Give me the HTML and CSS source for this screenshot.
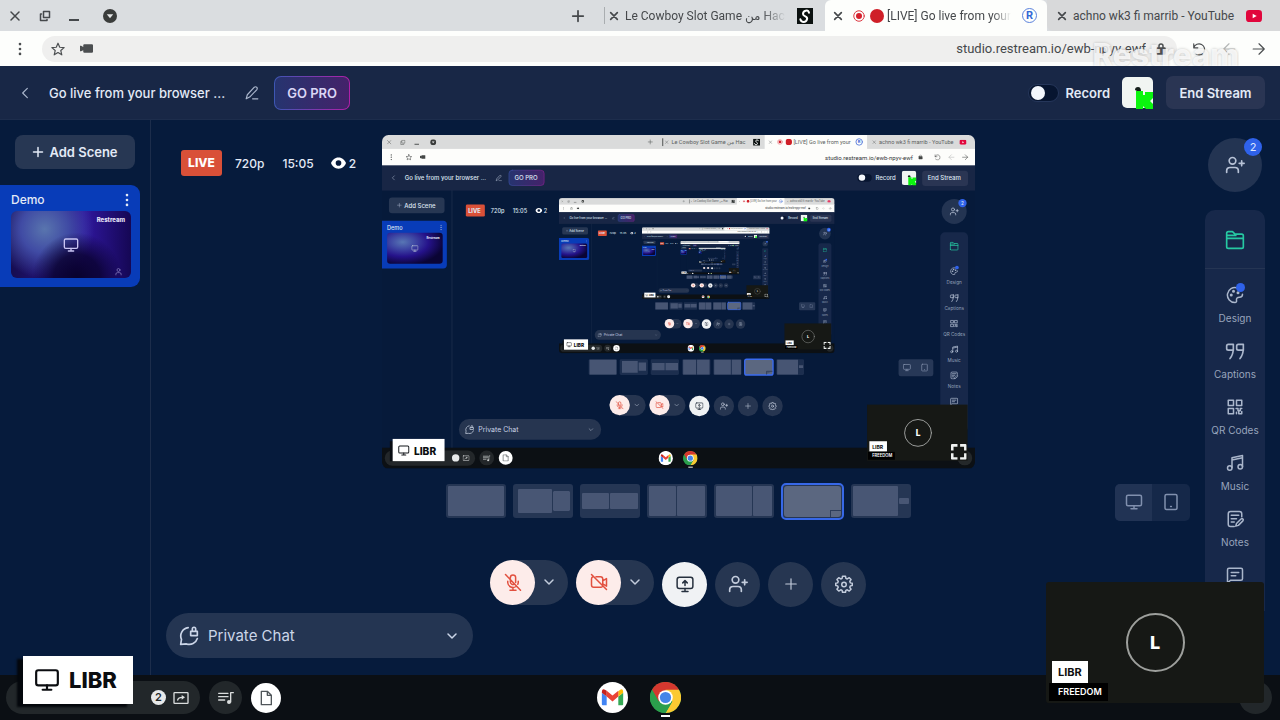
FILE: index.html
```html
<!DOCTYPE html>
<html lang="en">
<head>
<meta charset="utf-8">
<title>Restream Studio</title>
<meta name="viewport" content="width=device-width, initial-scale=1">
<link rel="stylesheet" href="styles.css">
</head>
<body>
<svg class="sprite" aria-hidden="true">
  <defs>
    <radialGradient id="glow" cx="0.28" cy="0.3" r="0.75">
      <stop offset="0" stop-color="#5876b4"/><stop offset="0.3" stop-color="#3e47a4"/><stop offset="0.62" stop-color="#25128a"/><stop offset="1" stop-color="#0a0434"/>
    </radialGradient>
    <linearGradient id="proEdge"><stop offset="0" stop-color="#3d57b4"/><stop offset="1" stop-color="#a31fa0"/></linearGradient>
    <linearGradient id="proFill"><stop offset="0" stop-color="#26346f"/><stop offset="1" stop-color="#44226a"/></linearGradient>
    <clipPath id="frame"><rect width="1280" height="720" rx="14"/></clipPath>
  </defs>
  <symbol id="i-close" viewBox="0 0 24 24"><path d="M4 4l16 16M20 4L4 20"/></symbol>
  <symbol id="i-restore" viewBox="0 0 24 24"><path d="M9 3h12v12H9zM5 8H3v13h13v-2"/></symbol>
  <symbol id="i-down-circle" viewBox="0 0 24 24"><circle cx="12" cy="12" r="12" fill="#3a3c3b" stroke="none"/><path d="M6.500 9h11L12 16z" fill="#e4e6e7" stroke="none"/></symbol>
  <symbol id="i-plus" viewBox="0 0 24 24"><path d="M12 3v18M3 12h18"/></symbol>
  <symbol id="i-dots" viewBox="0 0 24 24"><g fill="currentColor" stroke="none"><circle cx="12" cy="3.500" r="2.300"/><circle cx="12" cy="12" r="2.300"/><circle cx="12" cy="20.500" r="2.300"/></g></symbol>
  <symbol id="i-star" viewBox="0 0 24 24"><path d="M12 2l3 7 7.500.6-5.700 5 1.700 7.400-6.500-4-6.500 4 1.700-7.400-5.700-5L9 9z"/></symbol>
  <symbol id="i-camcorder" viewBox="0 0 24 16"><path d="M8 0h14q2 0 2 2v12q0 2-2 2H8q-2 0-2-2v-3l-4 2H0V3h2l4 2V2q0-2 2-2z" fill="currentColor" stroke="none"/></symbol>
  <symbol id="i-lock" viewBox="0 0 24 24"><rect x="4" y="10" width="16" height="12" rx="1" fill="currentColor"/><path d="M8 10V6a4 4 0 0 1 8 0v4"/></symbol>
  <symbol id="i-reload" viewBox="0 0 24 24"><path d="M3 3v7h7M3 10a9.500 9.500 0 1 1 2 9"/></symbol>
  <symbol id="i-back" viewBox="0 0 24 24"><path d="M22 12H3M12 3l-9 9 9 9"/></symbol>
  <symbol id="i-forward" viewBox="0 0 24 24"><path d="M2 12h19M12 3l9 9-9 9"/></symbol>
  <symbol id="i-left" viewBox="0 0 24 24"><path d="M16 4l-8 8 8 8"/></symbol>
  <symbol id="i-down" viewBox="0 0 24 24"><path d="M4 8l8 8 8-8"/></symbol>
  <symbol id="i-pencil" viewBox="0 0 24 24"><path d="M2 22l2-7L16 2q2-1.500 4 0 2 2 0 4.500L8 19zM13 22h9"/></symbol>
  <symbol id="i-eye" viewBox="0 0 24 18"><path d="M12 0C6 0 2 4 0 9c2 5 6 9 12 9s10-4 12-9C22 4 18 0 12 0z" fill="#fff" stroke="none"/><circle cx="12" cy="9" r="4.500" fill="#071a3a" stroke="none"/></symbol>
  <symbol id="i-monitor" viewBox="0 0 24 24"><rect x="2" y="3" width="20" height="14" rx="2"/><path d="M12 17v4M8 21h8"/></symbol>
  <symbol id="i-share" viewBox="0 0 24 24"><rect x="1.500" y="3" width="21" height="15" rx="3"/><path d="M12 18v4M8 22h8M12 14V8M9 10.500L12 7.500l3 3"/></symbol>
  <symbol id="i-tablet" viewBox="0 0 24 24"><rect x="4" y="2" width="16" height="20" rx="2"/><path d="M11.500 18h1"/></symbol>
  <symbol id="i-person" viewBox="0 0 24 24"><circle cx="12" cy="8" r="4"/><path d="M5 21v-2q0-4 4-4h6q4 0 4 4v2"/></symbol>
  <symbol id="i-person-plus" viewBox="0 0 24 24"><circle cx="9" cy="7" r="4"/><path d="M2 21v-2q0-4 4-4h6q4 0 4 4v2M20 7v6M17 10h6"/></symbol>
  <symbol id="i-mic-off" viewBox="0 0 24 24"><path d="M8.500 7V6a3.500 3.500 0 0 1 7 0v6.500M8.500 9v3a3.500 3.500 0 0 0 5 3M5 11v2a7 7 0 0 0 11 5M19 11v2l-.6 2M12 19.500V23M8 23h8M2 2l20 21"/></symbol>
  <symbol id="i-cam-off" viewBox="0 0 24 24"><path d="M8 5h6q3 0 3 3v8M4 5q-2 .5-2 3v8q0 3 3 3h9q2 0 2.500-1M17 10.500l5-3v10l-5-3M2 2l20 20"/></symbol>
  <symbol id="i-gear" viewBox="0 0 24 24"><path d="M9.500 4.500L10 1.500h4l.5 3 1.800.8L19 3.600 21.400 6l-1.700 2.600.8 1.900 2.500.5v3l-2.500.5-.8 1.900 1.700 2.600-2.400 2.400-2.700-1.700-1.800.8-.5 2.500h-4l-.5-2.500-1.800-.8L5 21.400 2.600 19l1.700-2.600-.8-1.900L1 14v-3l2.500-.5.8-1.900L2.600 6 5 3.600l2.700 1.700z"/><circle cx="12" cy="12.500" r="3"/></symbol>
  <symbol id="i-folder" viewBox="0 0 24 24"><path d="M2 20V4q0-2 2-2h5l3 3h8q2 0 2 2v13q0 2-2 2H4q-2 0-2-2zM2 10h20M2 6.500h11"/></symbol>
  <symbol id="i-palette" viewBox="0 0 24 24"><path d="M15 2.500A10 10 0 1 0 12 22q2.500 0 2-3-.5-4 4-4 4 0 4-4"/><g fill="currentColor"><circle cx="7" cy="12" r="1"/><circle cx="10" cy="7" r="1"/><circle cx="16" cy="9" r="1"/></g></symbol>
  <symbol id="i-quote" viewBox="0 0 24 24"><path d="M10 9q0 7-4 12M10 4H4Q2 4 2 6v3q0 2 2 2h6V4zM22 9q0 7-4 12M22 4h-6q-2 0-2 2v3q0 2 2 2h6V4z"/></symbol>
  <symbol id="i-qr" viewBox="0 0 24 24"><path d="M3 3h7v7H3zM14 3h7v7h-7zM3 14h7v7H3zM13.500 14h2.500v3h3v-3h2M14 21v-2M17 18v3h4v-3"/></symbol>
  <symbol id="i-music" viewBox="0 0 24 24"><path d="M8 18V5l14-3v15M8 8l14-3"/><circle cx="5" cy="18.500" r="3"/><circle cx="19" cy="17" r="3"/></symbol>
  <symbol id="i-notes" viewBox="0 0 24 24"><path d="M11 22H6q-3 0-3-3V5q0-3 3-3h12q3 0 3 3v4M7 7h10M7 11.500h7M7 16h4M14 18l6-6q1.500-1 2.500 0t0 2.500l-6 6-3.500 1z"/></symbol>
  <symbol id="i-comment" viewBox="0 0 24 24"><path d="M2 23V5q0-2 2-2h16q2 0 2 2v12q0 2-2 2H6zM7 8.500h10M7 13h6"/></symbol>
  <symbol id="i-chat-lock" viewBox="0 0 24 24"><path d="M11 2A10 10 0 0 0 3 16l-1 6 7-.5A10 10 0 0 0 22 15M14 6.500h8v5h-8zM16 6.500V3.500a2 2 0 0 1 4 0v3"/></symbol>
  <symbol id="i-cast" viewBox="0 0 24 24"><rect x="1.500" y="4" width="21" height="16" rx="1"/><path d="M7 15q1-4 7-4"/><path d="M13 7.500l5 3.500-5 3.500z" fill="currentColor" stroke="none"/></symbol>
  <symbol id="i-playlist" viewBox="0 0 24 24"><path d="M1 5h14M1 10h14M1 15h9M19 18V4h4"/><circle cx="16.500" cy="18" r="3" fill="currentColor" stroke="none"/></symbol>
  <symbol id="i-file" viewBox="0 0 24 24"><path d="M5 2h9l6 6v14H5zM14 2v6h6"/></symbol>
  <symbol id="i-expand" viewBox="0 0 24 24"><path d="M2 8V2h6M16 2h6v6M22 16v6h-6M8 22H2v-6"/></symbol>
  <symbol id="i-record" viewBox="0 0 24 24"><circle cx="12" cy="12" r="10.500" fill="none" stroke="#dc3b45" stroke-width="2"/><circle cx="12" cy="12" r="6" fill="#d51f2c" stroke="none"/></symbol>
  <symbol id="i-live" viewBox="0 0 24 24"><circle cx="12" cy="12" r="12" fill="#cf1f28" stroke="none"/></symbol>
  <symbol id="i-youtube" viewBox="0 0 24 18"><rect width="24" height="18" rx="5" fill="#e1063c" stroke="none"/><path d="M10 5.500l6 3.500-6 3.500z" fill="#fff" stroke="none"/></symbol>
  <symbol id="i-script" viewBox="0 0 24 24"><rect width="24" height="24" fill="#0b1110" stroke="none"/><path d="M18 7q-1-4-5-3T9 9q0 2 3.500 3.500T15 17q-1 4-5 4t-5-4" fill="none" stroke="#fff" stroke-width="3"/></symbol>
  <symbol id="i-gmail" viewBox="0 0 32 32"><g stroke="none"><circle cx="16" cy="16" r="16" fill="#fff"/><path d="M5 11l5 4v9H6q-1 0-1-1z" fill="#4285f4"/><path d="M27 11l-5 4v9h4q1 0 1-1z" fill="#34a853"/><path d="M22 9.500Q27 5 27 11l-5 4z" fill="#fbbc04"/><path d="M10 9l6 5 6-5v6l-6 5-6-5z" fill="#ea4335"/><path d="M5 11q0-6 5-2v6z" fill="#c5221f"/></g></symbol>
  <symbol id="i-chrome" viewBox="0 0 32 32"><g stroke="none"><circle cx="16" cy="16" r="16" fill="#2b9f4c"/><path d="M16 16L2.100 8A16 16 0 0 1 29.900 8z" fill="#d5382f"/><path d="M2.100 8H16v8l-7 4z" fill="#d5382f"/><path d="M16 8h13.900A16 16 0 0 1 16 32l7-12z" fill="#fbc932"/><path d="M2.100 8L9 20l7 4 7-4-7 12A16 16 0 0 1 2.100 8z" fill="#2b9f4c"/><circle cx="16" cy="16" r="7.500" fill="#fff"/><circle cx="16" cy="16" r="5.800" fill="#4585e8"/></g></symbol>
  <symbol id="i-avatar" viewBox="0 0 32 32"><g stroke="none"><rect width="31" height="31" rx="5" fill="#f1f5f2"/><path d="M13 13q0-3 3-3 3 0 3 4h-4z" fill="#16201c"/><path d="M14 14h7v4h2v-3h8v6l-3 3 3 3v5h-7l-3-3v3h-7z" fill="#0bf50e"/></g></symbol>

  <!-- Whole shared desktop, drawn on a 1280 x 720 canvas and stacked inside the preview -->
  <symbol id="desktop" viewBox="0 0 1280 720">
    <g clip-path="url(#frame)" fill="none" stroke-width="2" stroke-linecap="round" stroke-linejoin="round">
      <rect width="1280" height="720" fill="#061a3a"/>
      <rect width="1280" height="32" fill="#dadbdb"/>
      <path d="M826 32V0h221v32z" fill="#fdfdfb"/>
      <rect y="30" width="1280" height="36" fill="#fdfdfb"/>
      <g stroke="#444746" color="#444746">
        <use href="#i-close" x="10" y="10" width="11" height="11"/><use href="#i-restore" x="39" y="10" width="12" height="12"/><path d="M71 20h8M606 8v15"/>
        <use href="#i-down-circle" x="104" y="9" width="13" height="13"/><use href="#i-plus" x="573" y="9" width="12" height="12"/>
        <use href="#i-close" x="610" y="11" width="9" height="9"/><use href="#i-close" x="834" y="11" width="9" height="9"/><use href="#i-close" x="1058" y="11" width="9" height="9"/>
        <use href="#i-dots" x="13" y="41" width="14" height="14"/><use href="#i-star" x="51" y="41" width="14" height="14"/><use href="#i-camcorder" x="82" y="43" width="12" height="9"/>
        <use href="#i-lock" x="1157" y="42" width="11" height="11"/><use href="#i-reload" x="1192" y="41" width="14" height="14"/><use href="#i-back" x="1222" y="41" width="14" height="14" opacity=".4"/><use href="#i-forward" x="1252" y="41" width="14" height="14"/>
      </g>
      <use href="#i-script" x="801" y="8" width="15" height="15"/><use href="#i-record" x="853" y="9" width="12" height="12"/><use href="#i-live" x="871" y="8" width="14" height="14"/><use href="#i-youtube" x="1246" y="10" width="16" height="11"/>
      <circle cx="1030" cy="15" r="7" stroke="#5b7fdc"/>
      <g class="d-tab" stroke="none"><text x="625" y="20">Le Cowboy Slot Game من Hac</text><text x="888" y="20">[LIVE] Go live from your</text><text x="1073" y="20">achno wk3 fi marrib - YouTube</text><text x="1146" y="53" text-anchor="end" class="d-url">studio.restream.io/ewb-npyv-ewf</text><text x="1027" y="18" class="d-r">R</text></g>
      <rect y="66" width="1280" height="54" fill="#182645"/>
      <rect x="274" y="76" width="76" height="33" rx="7" fill="url(#proFill)" stroke="url(#proEdge)" stroke-width="1"/>
      <rect x="1026" y="84" width="31" height="17" rx="8" fill="#071530"/><circle cx="1036" cy="92" r="7" fill="#f4f7fb"/>
      <use href="#i-avatar" x="1122" y="77" width="32" height="32"/><rect x="1166" y="77" width="99" height="33" rx="7" fill="#2a3553"/>
      <path d="M151 120v555" stroke="#1b2c4b"/>
      <rect x="15" y="135" width="120" height="34" rx="7" fill="#273753"/>
      <path d="M0 185h132q8 0 8 8v87q0 8-8 8H0z" fill="#083cb8"/>
      <rect x="11" y="211" width="120" height="67" rx="7" fill="url(#glow)"/>
      <rect x="181" y="150" width="41" height="26" rx="3" fill="#d95038"/>
      <circle cx="1235" cy="165" r="27" fill="#233452"/><circle cx="1253" cy="147" r="9" fill="#2f62ea"/>
      <rect x="1205" y="210" width="60" height="430" rx="10" fill="#17284a"/>
      <g stroke="#b7c2d6" color="#b7c2d6">
        <use href="#i-left" x="18" y="86" width="13" height="13"/><use href="#i-pencil" x="245" y="86" width="14" height="14"/><use href="#i-plus" x="32" y="146" width="11" height="11"/><use href="#i-dots" x="121" y="193" width="13" height="13"/><use href="#i-monitor" x="63" y="237" width="16" height="16"/><use href="#i-eye" x="331" y="157" width="15" height="12"/>
        <use href="#i-person-plus" x="1225" y="155" width="20" height="20"/><use href="#i-folder" x="1225" y="230" width="20" height="20" stroke="#26c9a2"/><use href="#i-palette" x="1226" y="285" width="18" height="18"/><circle cx="1241" cy="286" r="4" fill="#2f62ea" stroke="none"/><use href="#i-quote" x="1225" y="342" width="20" height="20"/><use href="#i-qr" x="1226" y="398" width="18" height="18"/><use href="#i-music" x="1226" y="454" width="18" height="18"/><use href="#i-notes" x="1226" y="510" width="18" height="18"/><use href="#i-comment" x="1226" y="566" width="18" height="18"/>
      </g>
      <g stroke="none" fill="#dfe6f2" class="d-ui"><text x="49" y="98">Go live from your browser ...</text><text x="286" y="98">GO PRO</text><text x="1065" y="98">Record</text><text x="1178" y="98">End Stream</text><text x="48" y="157">Add Scene</text><text x="11" y="204" class="d-small">Demo</text><text x="186" y="168" class="d-live">LIVE</text><text x="235" y="168" class="d-small">720p</text><text x="282" y="168" class="d-small">15:05</text><text x="349" y="168" class="d-small">2</text><text x="1250" y="151" class="d-tiny">2</text></g>
      <g stroke="none" fill="#95a2ba" class="d-tiny" text-anchor="middle"><text x="1235" y="321">Design</text><text x="1235" y="377">Captions</text><text x="1235" y="433">QR Codes</text><text x="1235" y="489">Music</text><text x="1235" y="546">Notes</text></g>
      <text x="96" y="224" stroke="none" fill="#dfe0f3" class="d-mark">Restream</text>
      <g fill="#475573"><g fill="#1c2e4e"><rect x="446" y="484" width="61" height="34" rx="3"/><rect x="513" y="484" width="61" height="34" rx="3"/><rect x="580" y="484" width="61" height="34" rx="3"/><rect x="648" y="484" width="61" height="34" rx="3"/><rect x="715" y="484" width="61" height="34" rx="3"/><rect x="851" y="484" width="60" height="34" rx="3"/></g><rect x="448" y="485" width="58" height="32"/><path d="M518 488h34v25h-34zM554 491h16v18h-16zM583 492h27v16h-27zM612 492h27v16h-27zM650 485h28v32h-28zM680 485h27v32h-27zM717 485h36v32h-36zM755 485h20v32h-20z"/><rect x="783" y="484" width="61" height="34" rx="4" fill="#5b6780" stroke="#3b6cf0" stroke-width="3"/><path d="M830 516v-6h12" stroke="#34415a"/><path d="M853 485h45v32h-45zM900 497h9v6h-9z"/><rect x="1115" y="484" width="75" height="37" rx="5" opacity=".5"/></g>
      <g stroke="#8794af"><use href="#i-monitor" x="1124" y="493" width="18" height="18"/><use href="#i-tablet" x="1162" y="493" width="18" height="18"/></g>
      <g fill="#263550"><rect x="491" y="561" width="78" height="45" rx="22"/><rect x="577" y="561" width="78" height="45" rx="22"/><circle cx="738" cy="585" r="22"/><circle cx="790" cy="585" r="22"/><circle cx="843" cy="585" r="22"/><rect x="166" y="613" width="307" height="45" rx="22"/></g>
      <circle cx="513" cy="583" r="22" fill="#fdecea"/><circle cx="599" cy="583" r="22" fill="#fdecea"/><circle cx="685" cy="585" r="22" fill="#f0f2f4"/>
      <g stroke="#e2503f"><use href="#i-mic-off" x="504" y="574" width="18" height="18"/><use href="#i-cam-off" x="590" y="574" width="18" height="18"/></g>
      <use href="#i-share" x="676" y="576" width="18" height="18" stroke="#26303e"/>
      <g stroke="#c3ccdc"><use href="#i-down" x="544" y="577" width="12" height="12"/><use href="#i-down" x="630" y="577" width="12" height="12"/><use href="#i-person-plus" x="729" y="576" width="18" height="18"/><use href="#i-plus" x="783" y="578" width="14" height="14"/><use href="#i-gear" x="834" y="576" width="18" height="18"/><use href="#i-chat-lock" x="179" y="626" width="20" height="20"/><use href="#i-down" x="445" y="630" width="12" height="12"/></g>
      <text x="208" y="642" stroke="none" fill="#c9d3e5" class="d-chat">Private Chat</text>
      <rect y="675" width="1280" height="45" fill="#0c1014"/><rect x="6" y="681" width="195" height="33" rx="16" fill="#23272a"/><circle cx="226" cy="697" r="16" fill="#23272a"/><circle cx="1258" cy="697" r="16" fill="#24282a"/><circle cx="267" cy="697" r="15" fill="#fff"/><circle cx="159" cy="697" r="8" fill="#e7e9ea"/>
      <g stroke="#dadddd" color="#dadddd"><use href="#i-cast" x="174" y="690" width="15" height="15"/><use href="#i-playlist" x="218" y="690" width="16" height="16"/></g><use href="#i-file" x="259" y="689" width="16" height="16" stroke="#50565a"/>
      <use href="#i-gmail" x="597" y="682" width="31" height="31"/><use href="#i-chrome" x="650" y="682" width="31" height="31"/><path d="M662 717h8" stroke="#fff"/>
      <path d="M17 661h10v43H17z" fill="#080c12"/><rect x="23" y="656" width="112" height="48" fill="#fff"/><use href="#i-monitor" x="34" y="668" width="26" height="26" stroke="#15181c"/><text x="69" y="690" stroke="none" fill="#0b0d10" class="d-name">LIBR</text>
      <rect x="1047" y="582" width="217" height="121" fill="#161815"/><circle cx="1157" cy="643" r="29" stroke="#a2a4a2"/><text x="1152" y="649" stroke="none" fill="#fff" class="d-initial">L</text><rect x="1052" y="661" width="38" height="22" fill="#fff"/><rect x="1049" y="684" width="58" height="17" fill="#000"/><text x="1058" y="677" stroke="none" fill="#101010" class="d-tag">LIBR</text><text x="1058" y="696" stroke="none" fill="#fff" class="d-sub">FREEDOM</text>
      <use href="#i-expand" x="1228" y="667" width="34" height="34" stroke="#f0f2f0" stroke-width="4" stroke-linecap="square"/>
    </g>
  </symbol>
</svg>

<div class="screen">
  <div class="tabstrip">
    <div class="window-controls">
      <button class="bare" aria-label="Close window"><svg class="ic s12"><use href="#i-close"/></svg></button>
      <button class="bare" aria-label="Restore window"><svg class="ic s12"><use href="#i-restore"/></svg></button>
      <button class="bare minimize" aria-label="Minimise window"></button>
      <button class="bare" aria-label="Search tabs"><svg class="ic s14"><use href="#i-down-circle"/></svg></button>
    </div>
    <button class="bare new-tab" aria-label="New tab"><svg class="ic s14"><use href="#i-plus"/></svg></button>
    <div class="tab tab-first">
      <button class="bare" aria-label="Close tab"><svg class="ic s10"><use href="#i-close"/></svg></button>
      <span class="tab-title fade">Le Cowboy Slot Game من Hac</span>
      <svg class="ic s16"><use href="#i-script"/></svg>
    </div>
    <div class="tab tab-active">
      <button class="bare" aria-label="Close tab"><svg class="ic s10"><use href="#i-close"/></svg></button>
      <span class="tab-icons"><svg class="ic s12"><use href="#i-record"/></svg><svg class="ic s14"><use href="#i-live"/></svg></span>
      <span class="tab-title fade">[LIVE] Go live from your</span>
      <span class="favicon-r">R</span>
    </div>
    <div class="tab tab-last">
      <button class="bare" aria-label="Close tab"><svg class="ic s10"><use href="#i-close"/></svg></button>
      <span class="tab-title">achno wk3 fi marrib - YouTube</span>
      <svg class="ic youtube"><use href="#i-youtube"/></svg>
    </div>
  </div>

  <div class="toolbar">
    <button class="bare" aria-label="Menu"><svg class="ic s14"><use href="#i-dots"/></svg></button>
    <div class="omnibox">
      <button class="bare" aria-label="Bookmark"><svg class="ic s14"><use href="#i-star"/></svg></button>
      <svg class="ic camcorder"><use href="#i-camcorder"/></svg>
      <input class="url" type="text" aria-label="Address" value="studio.restream.io/ewb-npyv-ewf">
      <svg class="ic s12"><use href="#i-lock"/></svg>
    </div>
    <div class="nav">
      <button class="bare" aria-label="Reload"><svg class="ic s14"><use href="#i-reload"/></svg></button>
      <button class="bare dim" aria-label="Back"><svg class="ic s14"><use href="#i-back"/></svg></button>
      <button class="bare" aria-label="Forward"><svg class="ic s14"><use href="#i-forward"/></svg></button>
    </div>
  </div>

  <header class="studio-header">
    <button class="bare back" aria-label="Go back"><svg class="ic s14"><use href="#i-left"/></svg></button>
    <h1>Go live from your browser ...</h1>
    <button class="bare rename" aria-label="Rename"><svg class="ic s14"><use href="#i-pencil"/></svg></button>
    <button class="go-pro">GO PRO</button>
    <label class="record"><input type="checkbox" class="switch">Record</label>
    <svg class="ic avatar"><use href="#i-avatar"/></svg>
    <button class="end">End Stream</button>
  </header>

  <main class="studio">
    <aside class="scenes">
      <button class="add-scene"><svg class="ic s12"><use href="#i-plus"/></svg>Add Scene</button>
      <section class="scene">
        <div class="scene-head"><span>Demo</span><button class="bare" aria-label="Scene menu"><svg class="ic s14"><use href="#i-dots"/></svg></button></div>
        <div class="scene-thumb">
          <span class="thumb-mark">Restream</span>
          <svg class="ic s16"><use href="#i-monitor"/></svg>
          <svg class="ic thumb-person"><use href="#i-person"/></svg>
        </div>
      </section>
    </aside>

    <div class="stage">
      <div class="stats">
        <span class="live">LIVE</span><span>720p</span><span class="time">15:05</span>
        <span class="viewers"><svg class="ic eye"><use href="#i-eye"/></svg>2</span>
      </div>
      <svg class="preview" viewBox="0 0 1280 720" role="img" aria-label="Shared screen">
        <use href="#desktop" width="1280" height="720"/>
        <use href="#desktop" x="382" y="136" width="595" height="335"/>
        <use href="#desktop" x="561" y="199" width="276" height="155"/>
        <use href="#desktop" x="644" y="229" width="128" height="72"/>
        <use href="#desktop" x="683" y="243" width="59" height="33"/>
      </svg>
      <div class="layouts">
        <button class="layout" aria-label="Solo"><i></i></button>
        <button class="layout l-overlap" aria-label="Overlap"><i></i><i></i></button>
        <button class="layout l-strip" aria-label="Side by side"><i></i><i></i></button>
        <button class="layout" aria-label="Split"><i></i><i></i></button>
        <button class="layout l-wide" aria-label="Two thirds"><i></i><i></i></button>
        <button class="layout l-selected" aria-label="Picture in picture"><i></i><b></b></button>
        <button class="layout l-side" aria-label="Presentation"><i></i><i></i></button>
      </div>
      <div class="devices">
        <button class="on" aria-label="Desktop"><svg class="ic s18"><use href="#i-monitor"/></svg></button>
        <button aria-label="Mobile"><svg class="ic s18"><use href="#i-tablet"/></svg></button>
      </div>
      <div class="controls">
        <div class="pill"><button class="round off" aria-label="Unmute"><svg class="ic s18"><use href="#i-mic-off"/></svg></button><button class="bare more" aria-label="Microphone options"><svg class="ic s12"><use href="#i-down"/></svg></button></div>
        <div class="pill"><button class="round off" aria-label="Start camera"><svg class="ic s18"><use href="#i-cam-off"/></svg></button><button class="bare more" aria-label="Camera options"><svg class="ic s12"><use href="#i-down"/></svg></button></div>
        <button class="round active" aria-label="Share screen"><svg class="ic s18"><use href="#i-share"/></svg></button>
        <button class="round" aria-label="Invite"><svg class="ic s20"><use href="#i-person-plus"/></svg></button>
        <button class="round" aria-label="Add"><svg class="ic s14"><use href="#i-plus"/></svg></button>
        <button class="round" aria-label="Settings"><svg class="ic s18"><use href="#i-gear"/></svg></button>
      </div>
      <button class="chat"><svg class="ic s20"><use href="#i-chat-lock"/></svg><span>Private Chat</span><svg class="ic s12"><use href="#i-down"/></svg></button>
    </div>

    <aside class="rail">
      <button class="invite" aria-label="Invite guests"><svg class="ic s20"><use href="#i-person-plus"/></svg><span class="badge">2</span></button>
      <nav class="tools">
        <button class="tool files" aria-label="Files"><svg class="ic s20"><use href="#i-folder"/></svg></button>
        <button class="tool design"><svg class="ic s18"><use href="#i-palette"/></svg>Design</button>
        <button class="tool"><svg class="ic s20"><use href="#i-quote"/></svg>Captions</button>
        <button class="tool"><svg class="ic s18"><use href="#i-qr"/></svg>QR Codes</button>
        <button class="tool"><svg class="ic s18"><use href="#i-music"/></svg>Music</button>
        <button class="tool"><svg class="ic s18"><use href="#i-notes"/></svg>Notes</button>
        <button class="tool" aria-label="Comments"><svg class="ic s18"><use href="#i-comment"/></svg></button>
      </nav>
    </aside>
  </main>

  <footer class="shelf">
    <div class="shelf-left">
      <div class="desk"><span class="count">2</span><svg class="ic s16"><use href="#i-cast"/></svg></div>
      <button class="shelf-btn" aria-label="Media"><svg class="ic s16"><use href="#i-playlist"/></svg></button>
      <button class="shelf-btn light" aria-label="Files"><svg class="ic s16"><use href="#i-file"/></svg></button>
    </div>
    <div class="apps">
      <button class="bare" aria-label="Gmail"><svg class="ic s31"><use href="#i-gmail"/></svg></button>
      <button class="bare running" aria-label="Chrome"><svg class="ic s31"><use href="#i-chrome"/></svg></button>
    </div>
    <span class="shelf-btn launcher"></span>
  </footer>

  <div class="watermark">Restream</div>
  <div class="name-card"><svg class="ic s26"><use href="#i-monitor"/></svg>LIBR</div>
  <div class="camera">
    <div class="initial">L</div>
    <div class="caption"><span class="cap-name">LIBR</span><span class="cap-sub">FREEDOM</span></div>
  </div>
</div>
</body>
</html>
```
FILE: styles.css
```css
* { box-sizing: border-box; }
body { margin: 0; font-family: Inter, "DejaVu Sans", sans-serif; color: #e3eaf6; background: #061b3c; }
button, input { font: inherit; color: inherit; }
button { margin: 0; padding: 0; border: 0; background: none; display: flex; align-items: center; justify-content: center; cursor: pointer; }
.sprite { position: absolute; width: 0; height: 0; overflow: hidden; }
.ic { display: block; flex: none; fill: none; stroke: currentColor; stroke-width: 2; stroke-linecap: round; stroke-linejoin: round; }
.s10 { width: 10px; height: 10px; stroke-width: 4; }
.s12 { width: 12px; height: 12px; stroke-width: 3; }
.s14 { width: 14px; height: 14px; }
.s16 { width: 16px; height: 16px; }
.s18 { width: 18px; height: 18px; }
.s20 { width: 20px; height: 20px; }
.s26 { width: 26px; height: 26px; }
.s31 { width: 31px; height: 31px; }

.screen { position: relative; display: flex; flex-direction: column; min-height: 100vh; overflow: hidden; }

/* Browser */
.tabstrip { display: flex; align-items: center; height: 31px; background: #dadde0; font-family: Roboto, "DejaVu Sans", sans-serif; font-size: 12px; color: #45484b; }
.window-controls { display: flex; align-items: center; gap: 18px; padding-left: 9px; margin-right: auto; }
.window-controls button:last-child { margin-left: 6px; }
.minimize { width: 10px; height: 11px; border-bottom: 2px solid #45484b; }
.new-tab { margin-right: 19px; }
.new-tab .ic { stroke-width: 3; }
.tab { display: flex; align-items: center; height: 31px; gap: 6px; padding: 0 12px 0 8px; }
.tab-first { width: 221px; border-image: linear-gradient(transparent 25%, #a9adb0 25%, #a9adb0 75%, transparent 75%) 1; border-left: 1px solid; padding-left: 4px; }
.tab-active { width: 222px; padding-left: 8px; border-radius: 6px 6px 0 0; background: #fdfefc; padding-right: 10px; }
.tab-last { width: 233px; padding: 0 18px 0 10px; background: #d8d9da; border-radius: 0 0 0 6px; }
.tab-icons { display: flex; align-items: center; gap: 5px; margin-left: 4px; margin-right: -3px; }
.tab-title { flex: 1; min-width: 0; overflow: hidden; line-height: 20px; white-space: nowrap; }
.fade { margin-right: 5px; mask-image: linear-gradient(to right, #000 85%, transparent); }
.favicon-r { width: 15px; height: 15px; border: 1px solid #5b82dc; border-radius: 50%; color: #3267d6; font-size: 11px; font-weight: 700; line-height: 13px; text-align: center; }
.youtube { width: 16px; height: 12px; }
.toolbar { display: flex; align-items: center; height: 35px; padding: 0 14px 0 13px; gap: 15px; background: #fdfefc; color: #4b4e50; font-family: Roboto, sans-serif; font-size: 13px; }
.omnibox { display: flex; flex: 1; align-items: center; gap: 15px; height: 26px; padding: 0 10px 0 9px; border-radius: 13px; background: #efefee; }
.camcorder { width: 13px; height: 9px; }
.url { flex: 1; min-width: 0; margin-right: -6px; padding: 0; border: 0; outline: 0; background: none; text-align: right; color: #45484b; }
.nav { display: flex; gap: 16px; }
.dim { opacity: .4; }

/* Studio header */
.studio-header { display: flex; align-items: center; height: 54px; padding: 0 15px 0 18px; background: #182746; border-bottom: 1px solid #1d2d4c; font-size: 13px; font-weight: 600; }
.studio-header h1 { margin: 0 20px 0 17px; font-size: 13px; line-height: 20px; font-weight: 500; white-space: nowrap; }
.back, .rename { color: #aab6cc; }
.go-pro { margin-left: 15px; width: 76px; height: 34px; border: 1px solid transparent; border-radius: 7px; background: linear-gradient(90deg, #26346f, #44226a) padding-box, linear-gradient(90deg, #3d57b4, #b01fa8) border-box; color: #d9d5f5; }
.record { display: flex; align-items: center; gap: 7px; margin-left: auto; }
.switch { appearance: none; width: 31px; height: 18px; margin: 0; border: 1px solid #25365a; border-radius: 9px; background: #071530; }
.switch::before { content: ""; display: block; width: 14px; height: 14px; margin: 1px 2px; border-radius: 50%; background: #f2f6fc; }
.avatar { width: 32px; height: 32px; margin: 0 12px; }
.end { width: 99px; height: 33px; border-radius: 7px; background: #2a3553; }

/* Studio */
.studio { flex: 1; display: grid; grid-template-columns: 151px minmax(0, 1fr) 75px; }
.scenes { border-right: 1px solid #1c2d4b; padding-top: 15px; }
.add-scene { gap: 5px; width: 120px; height: 34px; margin-left: 15px; border-radius: 8px; background: #273753; font-size: 13px; font-weight: 600; }
.scene { width: 140px; margin-top: 16px; padding: 3px 9px 9px 11px; border-radius: 0 9px 9px 0; background: #083cb8; }
.scene-head { display: flex; align-items: center; justify-content: space-between; height: 23px; font-size: 12px; line-height: 16px; font-weight: 500; }
.scene-head button { margin-right: -3px; }
.scene-thumb { position: relative; display: flex; align-items: center; justify-content: center; height: 67px; border-radius: 6px; background: radial-gradient(ellipse at 55% 100%, #08012c 0, #08012ccc 25%, transparent 48%), radial-gradient(circle at 28% 27%, #5975ae 0, #404ba4 24%, transparent 50%), linear-gradient(90deg, #160d50, #3017a0 60%, #150754); color: #c9c5f4; }
.thumb-mark { position: absolute; top: 4px; right: 6px; font-size: 6px; line-height: 10px; font-weight: 800; color: #e4e2f6; }
.thumb-person { position: absolute; right: 8px; bottom: 2px; width: 9px; height: 9px; opacity: .6; }

.stage { display: grid; grid-template-columns: minmax(200px, 1fr) minmax(0, 593px) minmax(90px, 1fr); grid-template-rows: auto auto auto 1fr; padding: 15px 0 17px; }
.stats { display: flex; align-items: center; justify-content: flex-start; align-self: start; height: 30px; margin-top: 13px; padding-left: 30px; font-size: 12px; font-weight: 500; }
.live { width: 41px; height: 26px; margin-right: 13px; border-radius: 3px; background: #d95038; color: #fff; font-weight: 800; line-height: 26px; text-align: center; }
.time { margin: 0 17px 0 18px; }
.viewers { display: flex; align-items: center; gap: 3px; }
.eye { width: 15px; height: 12px; }
.preview { display: block; width: 100%; height: auto; aspect-ratio: 16 / 9; }
.layouts { grid-column: 2; display: flex; justify-content: center; align-items: center; gap: 7px; height: 37px; margin-top: 14px; }
.layout { width: 60px; height: 34px; padding: 2px; gap: 1px; border-radius: 3px; background: #253654; align-items: stretch; }
.layout i { flex: 1; background: #485674; border-radius: 1px; }
.l-overlap { padding: 5px 3px 5px 5px; }
.l-overlap i:first-child { flex: 2; }
.l-overlap i:last-child { margin: 2px 0; outline: 1px solid #253654; }
.l-strip i { margin: 7px 0; }
.l-wide i:first-child { flex: 2; }
.l-selected { position: relative; width: 63px; height: 37px; border: 2px solid #3768e8; border-radius: 5px; padding: 1px; }
.l-selected i { background: #5b6780; border-radius: 3px; }
.l-selected b { position: absolute; right: 1px; bottom: 1px; width: 11px; height: 7px; border: 1px solid #2e3d59; border-width: 1px 0 0 1px; }
.l-side i:first-child { flex: 5; }
.l-side i:last-child { margin: 12px 0; }
.devices { display: flex; justify-self: end; height: 37px; margin: 15px 15px 0 0; border-radius: 5px; overflow: hidden; background: #152849; color: #8190ae; }
.devices button { width: 38px; }
.devices .on { width: 37px; background: #213354; }
.controls { grid-column: 1 / -1; display: flex; justify-content: center; align-items: flex-end; gap: 8px; margin-top: 39px; color: #c3ccdc; }
.pill { display: flex; width: 78px; margin-bottom: 2px; border-radius: 23px; background: #263651; }
.more { flex: 1; padding-right: 6px; }
.round { width: 45px; height: 45px; border-radius: 50%; background: #263651; }
.off { background: #fdecea; color: #e2503f; }
.active { background: #f0f2f4; color: #26303e; }
.chat { grid-column: 1 / -1; align-self: end; justify-content: flex-start; gap: 9px; width: 307px; height: 45px; margin-left: 15px; padding: 0 15px 0 13px; border-radius: 23px; background: #243552; color: #cbd5e8; font-size: 15px; }
.chat span { flex: 1; text-align: left; }

.rail { display: flex; flex-direction: column; align-items: center; width: 60px; padding-top: 18px; }
.invite { position: relative; width: 54px; height: 54px; border-radius: 50%; background: #233452; color: #b7c2d6; }
.badge { position: absolute; top: 0; right: 0; width: 18px; height: 18px; border-radius: 50%; background: #2f62ea; color: #dfe8ff; font-size: 11px; line-height: 18px; text-align: center; }
.tools { width: 60px; height: 401px; margin-top: 18px; overflow: hidden; border-radius: 10px 10px 0 0; background: #17284a; color: #97a4bc; }
.tool { flex-direction: column; justify-content: flex-start; gap: 6px; width: 100%; height: 56px; padding-top: 9px; font-size: 10px; line-height: 14px; }
.tool .s18 { margin: 1px; }
.tool .ic { color: #aab6cb; }
.files { height: 59px; padding-top: 20px; margin-bottom: 7px; border-bottom: 1px solid #253553; }
.files .ic { color: #26c9a2; }
.design { position: relative; }
.design::after { content: ""; position: absolute; top: 7px; right: 20px; width: 9px; height: 9px; border-radius: 50%; background: #2f62ea; }

/* Shelf */
.shelf { display: grid; grid-template-columns: 1fr auto 1fr; align-items: center; height: 45px; padding: 0 8px 0 6px; background: #0b0f14; }
.shelf-left { display: flex; align-items: center; gap: 9px; }
.desk { display: flex; align-items: center; justify-content: flex-end; gap: 7px; width: 194px; height: 33px; padding-right: 11px; border-radius: 17px; background: #22272a; color: #dadddd; }
.count { width: 15px; height: 15px; border-radius: 50%; background: #e7e9ea; color: #22272a; font-size: 11px; font-weight: 600; line-height: 15px; text-align: center; }
.shelf-btn { width: 33px; height: 33px; border-radius: 50%; background: #22272a; color: #dadddd; }
.light { width: 30px; height: 30px; background: #fff; color: #50565a; }
.apps { display: flex; gap: 22px; }
.running { position: relative; }
.running::after { content: ""; position: absolute; bottom: -4px; width: 9px; height: 2px; background: #fff; }
.launcher { justify-self: end; }

/* Stream overlays */
.watermark { position: absolute; top: 37px; right: 41px; font-size: 31px; line-height: 36px; font-weight: 800; color: rgba(255, 255, 255, .8); text-shadow: 0 0 3px rgba(110, 110, 110, .4); clip-path: inset(0 0 7px 0); }
.name-card { position: absolute; left: 23px; bottom: 16px; display: flex; align-items: center; gap: 9px; width: 110px; height: 48px; padding-left: 11px; background: #fff; box-shadow: -6px 3px 2px #04070c; color: #0b0d10; font-size: 22px; font-weight: 800; }
.camera { position: absolute; right: 16px; bottom: 17px; display: flex; align-items: center; justify-content: center; width: 218px; height: 121px; border-radius: 3px; background: #161815; }
.initial { width: 59px; height: 59px; border: 2px solid #9d9f9c; border-radius: 50%; color: #fff; font-size: 18px; font-weight: 800; line-height: 55px; text-align: center; }
.caption { position: absolute; left: 3px; bottom: 2px; display: flex; flex-direction: column; align-items: flex-start; }
.cap-name { margin-left: 3px; padding: 0 6px; background: #fff; color: #101010; font-size: 11px; font-weight: 700; line-height: 22px; }
.cap-sub { padding: 0 6px 0 9px; background: #000; color: #fff; font-size: 9px; font-weight: 600; line-height: 18px; }

/* Text inside the shared screen */
.d-tab { font: 12px Roboto, "DejaVu Sans", sans-serif; fill: #5c5f61; }
.d-url { font-size: 13px; fill: #333639; }
.d-r { font-size: 9px; font-weight: 700; fill: #3267d6; }
.d-ui { font-size: 13px; font-weight: 500; }
.d-small { font-size: 12px; }
.d-live { font-size: 12px; font-weight: 800; }
.d-tiny { font-size: 10px; }
.d-mark { font-size: 6px; font-weight: 800; }
.d-chat { font-size: 15px; }
.d-name { font-size: 22px; font-weight: 800; }
.d-initial { font-size: 18px; font-weight: 800; }
.d-tag { font-size: 11px; font-weight: 700; }
.d-sub { font-size: 9px; font-weight: 600; }
```
